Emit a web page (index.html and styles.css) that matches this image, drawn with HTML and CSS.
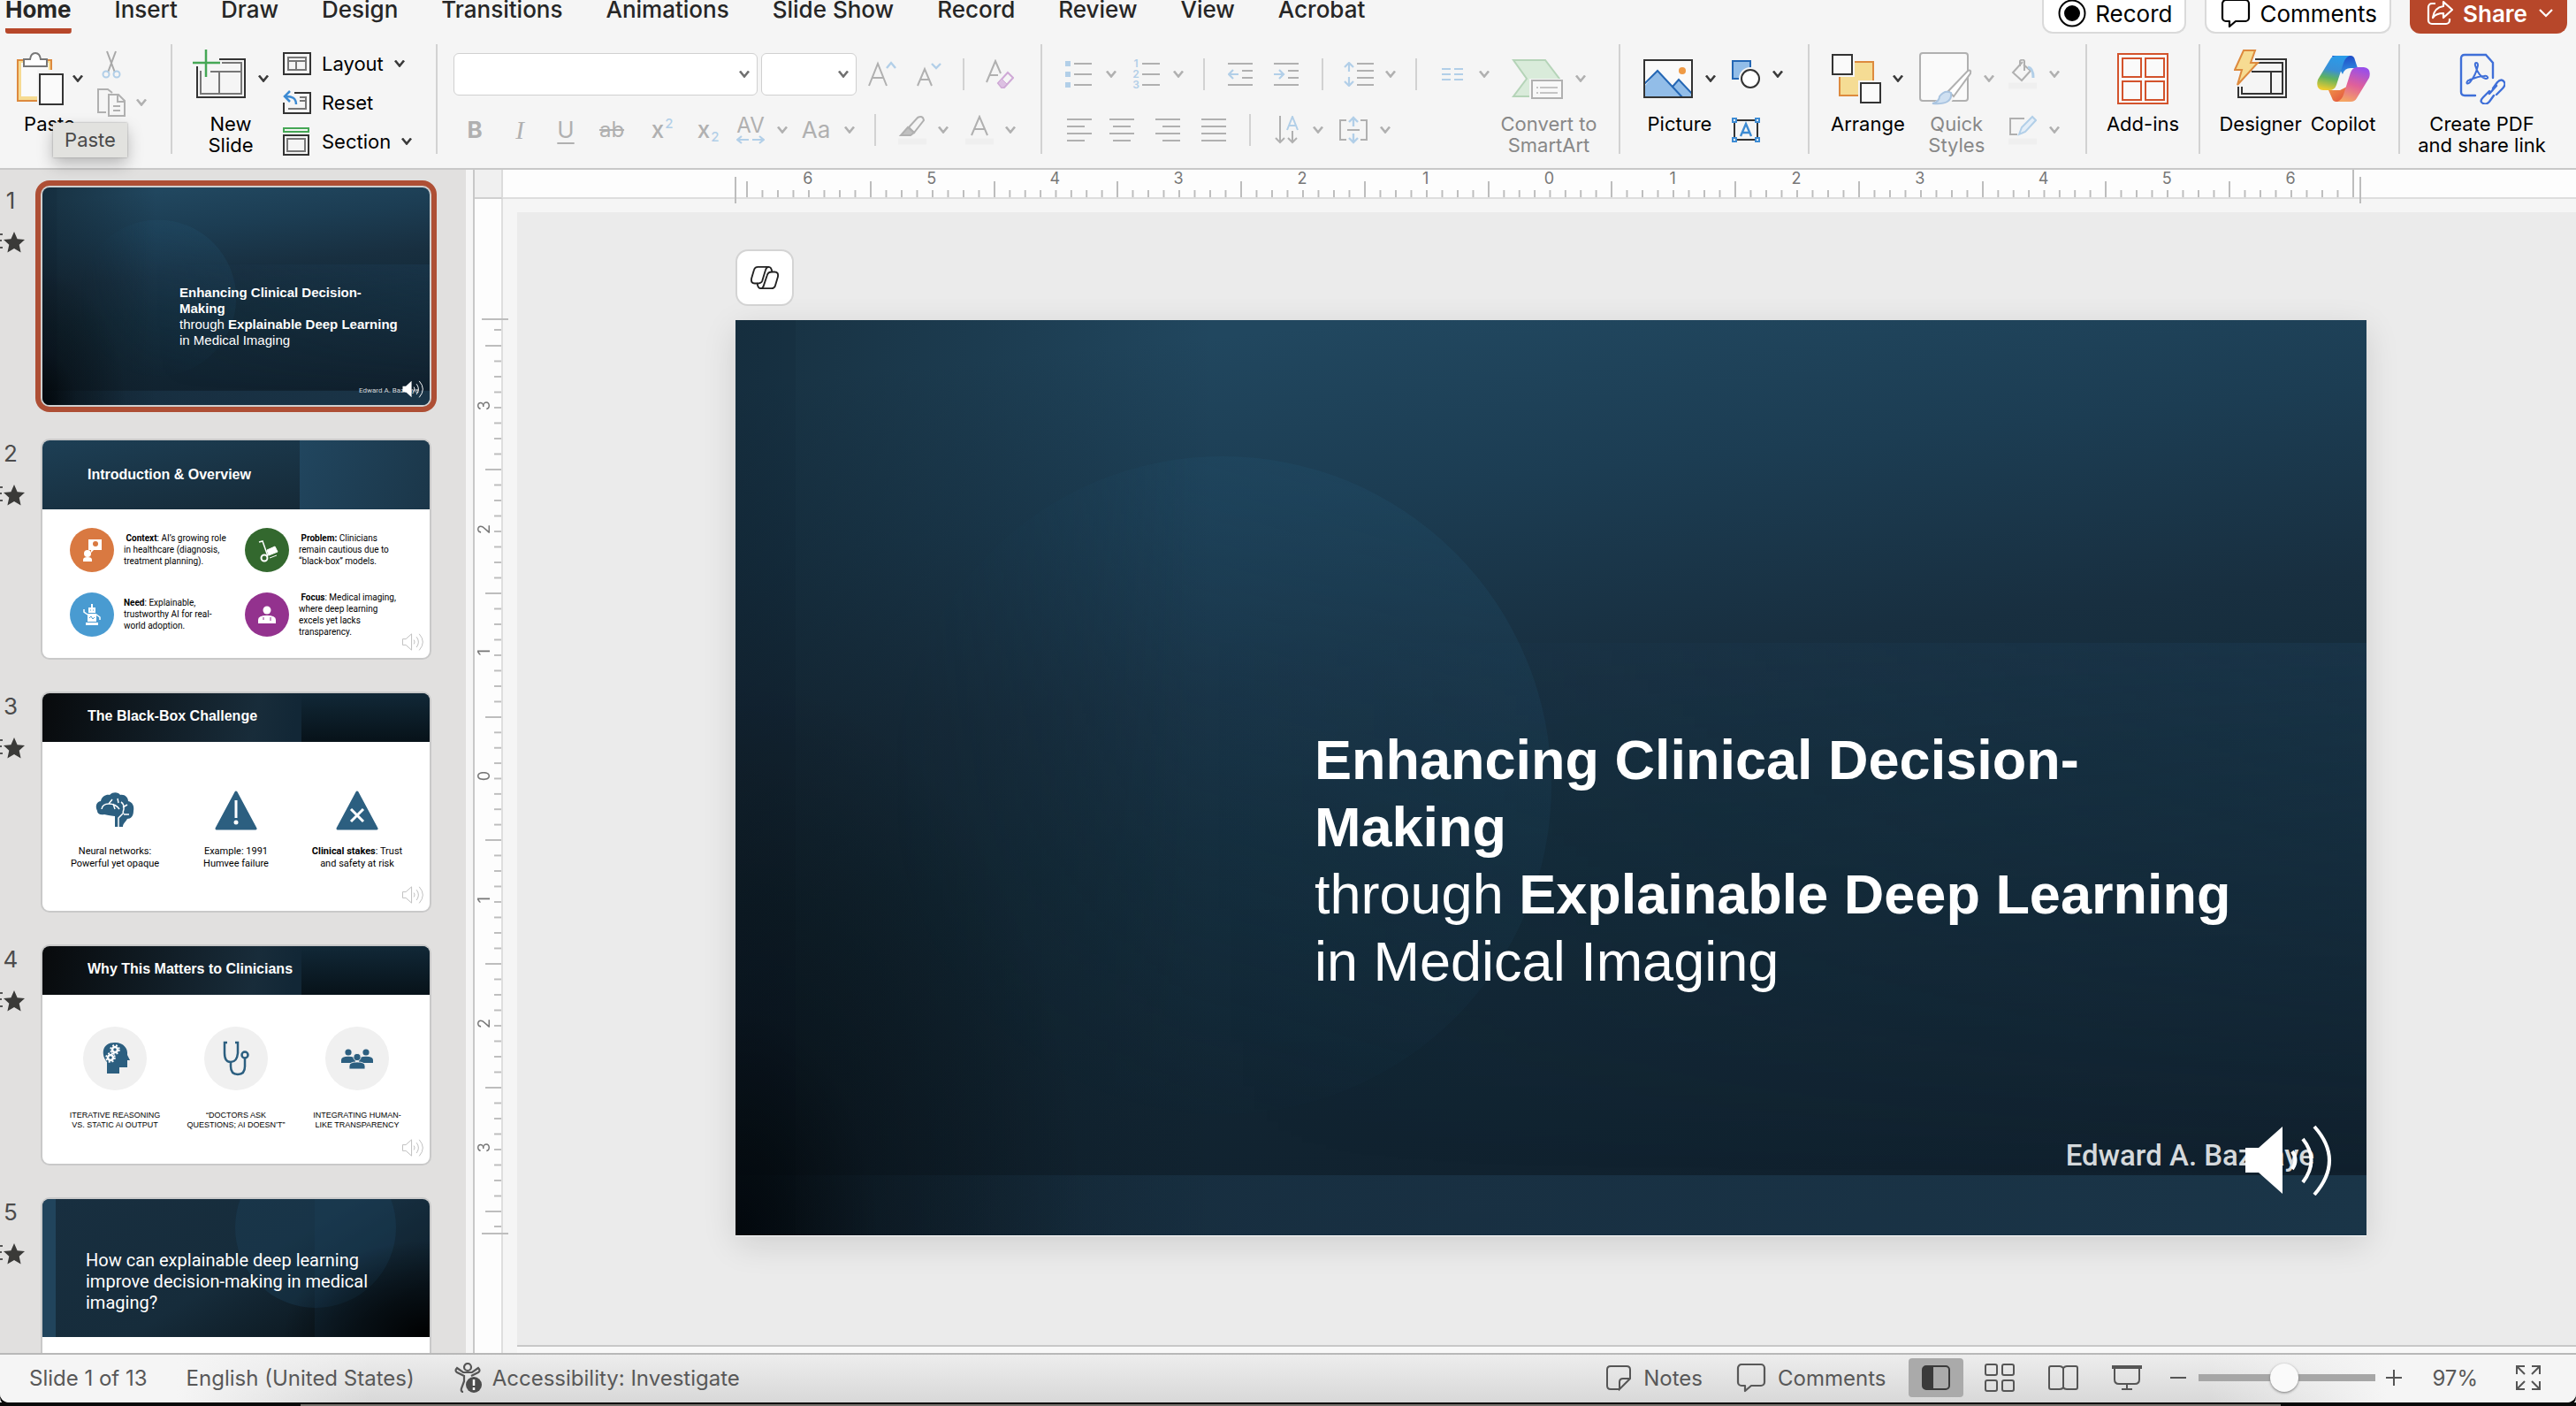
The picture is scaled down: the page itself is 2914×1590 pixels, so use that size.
FILE: index.html
```html
<!DOCTYPE html>
<html lang="en">
<head>
<meta charset="utf-8">
<title>Presentation editor</title>
<link rel="stylesheet" href="styles.css">
</head>
<body>
<svg class="defs" aria-hidden="true">
  <defs>
    <linearGradient id="gBase" x1="0.39" y1="0" x2="0.58" y2="1">
      <stop offset="0" stop-color="#21475f"/><stop offset="0.18" stop-color="#1c3d53"/><stop offset="0.38" stop-color="#182f40"/><stop offset="0.55" stop-color="#132a38"/><stop offset="1" stop-color="#10202d"/>
    </linearGradient>
    <linearGradient id="gLeft" x1="0" y1="0" x2="1" y2="0">
      <stop offset="0" stop-color="#0a1218" stop-opacity="0.42"/><stop offset="0.5" stop-color="#0a1218" stop-opacity="0.22"/><stop offset="1" stop-color="#0a1218" stop-opacity="0"/>
    </linearGradient>
    <radialGradient id="gCorner" cx="0" cy="1" r="1">
      <stop offset="0" stop-color="#000204" stop-opacity="0.78"/><stop offset="0.4" stop-color="#000204" stop-opacity="0.28"/><stop offset="1" stop-color="#000204" stop-opacity="0"/>
    </radialGradient>
    <linearGradient id="gCircle" x1="0.65" y1="0" x2="0.35" y2="1">
      <stop offset="0" stop-color="#22506c" stop-opacity="0.32"/><stop offset="0.6" stop-color="#1d4560" stop-opacity="0.16"/><stop offset="1" stop-color="#1d4560" stop-opacity="0"/>
    </linearGradient>
    <linearGradient id="gSide" x1="0" y1="0" x2="1" y2="0">
      <stop offset="0" stop-color="#000"/><stop offset="0.45" stop-color="#fff"/><stop offset="1" stop-color="#fff"/>
    </linearGradient>
    <mask id="mSide"><rect x="179" y="154" width="744" height="744" fill="url(#gSide)"/></mask>
    <linearGradient id="gPanel" x1="0" y1="0" x2="1" y2="0">
      <stop offset="0" stop-color="#1e3f5a" stop-opacity="0"/><stop offset="1" stop-color="#1e3f5a" stop-opacity="0.38"/>
    </linearGradient>
    <linearGradient id="gFade" x1="0" y1="0" x2="0" y2="1">
      <stop offset="0" stop-color="#fff"/><stop offset="1" stop-color="#000"/>
    </linearGradient>
    <mask id="mFade"><rect x="540" y="365" width="1305" height="602" fill="url(#gFade)"/></mask>
    <linearGradient id="gBand" x1="0" y1="0" x2="1" y2="0">
      <stop offset="0" stop-color="#1c3c52" stop-opacity="0.2"/><stop offset="0.35" stop-color="#1b3549" stop-opacity="0.7"/><stop offset="1" stop-color="#1a3548"/>
    </linearGradient>
    <linearGradient id="gBlue" x1="0" y1="0" x2="0.2" y2="1"><stop offset="0" stop-color="#1d42c4"/><stop offset="1" stop-color="#2f8fe0"/></linearGradient>
    <linearGradient id="gCoA" x1="0.5" y1="0" x2="0.3" y2="1"><stop offset="0" stop-color="#2a9be8"/><stop offset="0.4" stop-color="#3a8fd6"/><stop offset="0.65" stop-color="#5fb25f"/><stop offset="1" stop-color="#f2cc2e"/></linearGradient>
    <linearGradient id="gCoB" x1="0.6" y1="0" x2="0.3" y2="1"><stop offset="0" stop-color="#9a4fe8"/><stop offset="0.5" stop-color="#e0609a"/><stop offset="1" stop-color="#f5a562"/></linearGradient>
    <linearGradient id="gCoC" x1="0" y1="0" x2="1" y2="1"><stop offset="0" stop-color="#f29a4a"/><stop offset="1" stop-color="#e04a3c"/></linearGradient>
    <symbol id="art" viewBox="0 0 1845 1035" preserveAspectRatio="none">
      <rect width="1845" height="1035" fill="url(#gBase)"/>
      <rect x="540" y="365" width="1305" height="602" fill="url(#gPanel)" mask="url(#mFade)"/>
      <rect y="967" width="1845" height="68" fill="url(#gBand)"/>
      <circle cx="551" cy="526" r="372" fill="url(#gCircle)" mask="url(#mSide)"/>
      <rect width="543" height="1035" fill="url(#gLeft)"/>
      <rect y="400" width="400" height="635" fill="url(#gCorner)"/>
      <rect width="68" height="1035" fill="#02070b" opacity="0.06"/>
    </symbol>
    <symbol id="chev" viewBox="0 0 12 8"><path d="M1 0.5L6 6.5L11 0.5" fill="none" stroke="currentColor" stroke-width="2.6"/></symbol>
    <symbol id="audio" viewBox="0 0 104 80"><path d="M2 26h15L44 2v76L17 54H2z" fill="var(--spk)" stroke="var(--spkline)" stroke-width="var(--spkw)"/><path d="M55 30q7 10 0 20M67 16q19 24 0 49M80 2q34 38 0 77" fill="none" stroke="var(--spkwave)" stroke-width="4"/></symbol>
    <symbol id="star" viewBox="0 0 28 24"><path d="M0 3h3M0 10h2M0 18h3" stroke="#555" stroke-width="2"/><path d="M16 0l3.600 8.200 8.400.8-6.300 5.700 1.900 8.800L16 19l-7.600 4.500 1.900-8.800L4 9l8.400-.8z" fill="#3a3a38"/></symbol>
    <symbol id="comment" viewBox="0 0 34 34"><path d="M6 2h22a4 4 0 0 1 4 4v16a4 4 0 0 1-4 4H17l-7 6v-6H6a4 4 0 0 1-4-4V6a4 4 0 0 1 4-4z" fill="none" stroke="currentColor" stroke-width="2.200" stroke-linejoin="round"/></symbol>
    <symbol id="person" viewBox="0 0 20 20"><circle cx="10" cy="5" r="4.500"/><path d="M0 20v-4q0-5 10-5t10 5v4z"/></symbol>
  </defs>
</svg>

<header class="topbar">
  <nav class="tabs">
    <a class="tab active" href="#">Home</a><a class="tab" href="#">Insert</a><a class="tab" href="#">Draw</a><a class="tab" href="#">Design</a><a class="tab" href="#">Transitions</a><a class="tab" href="#">Animations</a><a class="tab" href="#">Slide Show</a><a class="tab" href="#">Record</a><a class="tab" href="#">Review</a><a class="tab" href="#">View</a><a class="tab" href="#">Acrobat</a>
  </nav>
  <div class="top-actions">
    <button class="pill"><svg width="32" height="32" viewBox="0 0 32 32"><circle cx="16" cy="16" r="14.500" fill="none" stroke="#000" stroke-width="2"/><circle cx="16" cy="16" r="9"/></svg>Record</button>
    <button class="pill"><svg width="34" height="34"><use href="#comment"/></svg>Comments</button>
    <button class="pill share"><svg width="32" height="32" viewBox="0 0 32 32" fill="none" stroke="#fff" stroke-width="2.200" stroke-linejoin="round"><path d="M11 5H7a4 4 0 0 0-4 4v15a4 4 0 0 0 4 4h16a4 4 0 0 0 4-4v-2"/><path d="M20 3l10 9-10 9v-5c-6 0-9 1-12 5 1-8 5-12 12-13z"/></svg>Share<svg class="share-chev" width="16" height="10" viewBox="0 0 16 10" fill="none" stroke="#fff" stroke-width="2.200"><path d="M1 1l7 7 7-7"/></svg></button>
  </div>
</header>

<section class="ribbon" aria-label="Home ribbon">
  <div class="group g-clip">
    <div class="paste-wrap">
      <button class="big"><span class="big-icons"><svg width="54" height="60" viewBox="0 0 54 60"><path d="M2 9h38v46H2z" fill="#f6db92" stroke="#dd8a3e" stroke-width="2"/><path d="M6 12h31v38H6z" fill="#fafafa"/><path d="M24 20h30v40H24z" fill="#f5f5f5"/><path d="M9 8h7q1-7 6-7t6 7h7v8H9z" fill="#fff" stroke="#777" stroke-width="2"/><path d="M27 25h26v34H27z" fill="#fafafa" stroke="#333" stroke-width="2"/></svg><svg class="chev" width="12" height="8"><use href="#chev"/></svg></span><span>Paste</span></button>
      <div class="tooltip" role="tooltip">Paste</div>
    </div>
    <div class="clip-col">
      <button class="ico off" aria-label="Cut"><svg width="22" height="32" viewBox="0 0 22 32" fill="none"><path d="M6 1l9 24M16 1L7 25" stroke="#a8a8a8" stroke-width="2"/><circle cx="5" cy="27" r="3.500" stroke="#b2cfe8" stroke-width="2"/><circle cx="17" cy="27" r="3.500" stroke="#b2cfe8" stroke-width="2"/></svg></button>
      <button class="ico off row-ico" aria-label="Copy"><svg width="32" height="32" viewBox="0 0 32 32" fill="none" stroke="#b0b0b0" stroke-width="2"><path d="M10 27H1V1h11l5 4"/><path d="M13 7h11l7 7v17H13zM23 7v8h8M18 20h8M18 25h8"/></svg><svg class="chev" width="12" height="8"><use href="#chev"/></svg></button>
    </div>
  </div>

  <div class="group g-slides">
    <button class="big"><span class="big-icons"><svg width="60" height="66" viewBox="0 0 60 66" fill="none"><path d="M30 11h29v43H5V19" stroke="#333" stroke-width="2"/><path d="M33 15h22v35H9V24M20 25h35M30 25v25" stroke="#777" stroke-width="2"/><path d="M15 0v31M0 15h31" stroke="#45a755" stroke-width="2.500"/></svg><svg class="chev" width="12" height="8"><use href="#chev"/></svg></span><span>New<br>Slide</span></button>
    <div class="slide-cmds">
      <button class="cmd"><svg width="32" height="28" viewBox="0 0 32 28" fill="none"><path d="M1 2h30v24H1z" stroke="#333" stroke-width="2"/><path d="M6 7h20v14H6zM6 11h20M15 11v10" stroke="#777" stroke-width="2"/></svg>Layout<svg class="chev" width="12" height="8"><use href="#chev"/></svg></button>
      <button class="cmd"><svg width="32" height="28" viewBox="0 0 32 28" fill="none"><path d="M13 3h18v23H1V14" stroke="#333" stroke-width="2"/><path d="M19 8h7v13H6M19 12h7" stroke="#777" stroke-width="2"/><path d="M8 1L2 7l6 6M2 7q13-1 13 9" stroke="#3d8bd3" stroke-width="2.500"/></svg>Reset</button>
      <button class="cmd"><svg width="32" height="32" viewBox="0 0 32 32" fill="none"><path d="M1 1h28v4H1z" stroke="#45a755" stroke-width="2"/><path d="M1 9h28v22H1z" stroke="#333" stroke-width="2"/><path d="M5 13h20v14H5z" stroke="#777" stroke-width="2"/></svg>Section<svg class="chev" width="12" height="8"><use href="#chev"/></svg></button>
    </div>
  </div>

  <div class="group g-font">
    <div class="rows off">
      <div class="row font-a">
        <label class="combo"><select aria-label="Font"><option></option></select><svg width="12" height="8"><use href="#chev"/></svg></label>
        <i></i>
        <label class="combo"><select aria-label="Font size"><option></option></select><svg width="12" height="8"><use href="#chev"/></svg></label>
        <button class="ico" aria-label="Increase font size"><svg width="32" height="30" viewBox="0 0 32 30" fill="none"><path d="M1 28L11 3l10 25M4 19h14" stroke="#b0b0b0" stroke-width="2"/><path d="M21 8l5-6 5 6" stroke="#b2cfe8" stroke-width="2.400"/></svg></button>
        <button class="ico" aria-label="Decrease font size"><svg width="28" height="30" viewBox="0 0 28 30" fill="none"><path d="M1 28L9 9l8 19M4 21h11" stroke="#b0b0b0" stroke-width="2"/><path d="M17 3l5 5 5-5" stroke="#b2cfe8" stroke-width="2.400"/></svg></button>
        <span class="sep"></span>
        <button class="ico" aria-label="Clear formatting"><svg width="32" height="34" viewBox="0 0 32 34" fill="none"><path d="M1 26L11 2l6 14M4 18h10" stroke="#b0b0b0" stroke-width="2"/><path d="M25 15l6 6-10 11h-3l-4-5z" stroke="#cfa9d6" stroke-width="2"/><path d="M18 22l6 6-4 4h-2l-4-5z" fill="#dcc0e2" stroke="#cfa9d6"/></svg></button>
      </div>
      <div class="row font-b">
        <button class="ico glyph b">B</button><button class="ico glyph i">I</button><button class="ico glyph u">U</button><button class="ico glyph s">ab</button>
        <button class="ico glyph x">x<sup>2</sup></button><button class="ico glyph x">x<sub>2</sub></button>
        <button class="ico glyph av">AV<svg width="32" height="10" viewBox="0 0 32 10" fill="none" stroke="#b2cfe8" stroke-width="2.200"><path d="M6 1L1 5l5 4M1 5h13M26 1l5 4-5 4M31 5H18"/></svg></button>
        <svg width="12" height="8"><use href="#chev"/></svg>
        <button class="ico glyph aa">Aa</button>
        <svg width="12" height="8"><use href="#chev"/></svg>
        <span class="sep"></span>
        <button class="ico" aria-label="Highlight"><svg width="32" height="34" viewBox="0 0 32 34" fill="none" stroke="#b0b0b0" stroke-width="2"><path d="M12 14L22 3q6-3 7 3L18 20z"/><path d="M11 14l7 6-4 3H3z" fill="#c0c0c0"/><path d="M0 30h32" stroke="#efefef" stroke-width="7"/></svg></button>
        <svg width="12" height="8"><use href="#chev"/></svg>
        <button class="ico" aria-label="Font color"><svg width="32" height="34" viewBox="0 0 32 34" fill="none" stroke="#b0b0b0" stroke-width="2"><path d="M7 23L16 2l9 21M10 16h12"/><path d="M0 30h32" stroke="#efefef" stroke-width="7"/></svg></button>
        <svg width="12" height="8"><use href="#chev"/></svg>
      </div>
    </div>
  </div>

  <div class="group g-para">
    <div class="rows off">
      <div class="row para-a">
        <button class="ico" aria-label="Bullets"><svg width="30" height="32" viewBox="0 0 30 32"><path d="M0 1h6v6H0zM0 13h6v6H0zM0 25h6v6H0z" fill="#b2cfe8"/><path d="M10 4h20M10 16h20M10 28h20" stroke="#b0b0b0" stroke-width="2"/></svg></button>
        <svg width="12" height="8"><use href="#chev"/></svg>
        <button class="ico numbering" aria-label="Numbering"><span class="nums">1<br>2<br>3</span><svg width="20" height="34" viewBox="0 0 20 34"><path d="M0 5h20M0 17h20M0 29h20" stroke="#b0b0b0" stroke-width="2"/></svg></button>
        <svg width="12" height="8"><use href="#chev"/></svg>
        <span class="sep"></span>
        <button class="ico" aria-label="Decrease indent"><svg width="28" height="28" viewBox="0 0 28 28" fill="none" stroke="#b0b0b0" stroke-width="2"><path d="M0 2h28M16 10h12M16 18h12M0 26h28"/><path d="M6 9l-5 5 5 5M1 14h11" stroke="#b2cfe8" stroke-width="2.200"/></svg></button>
        <button class="ico" aria-label="Increase indent"><svg width="28" height="28" viewBox="0 0 28 28" fill="none" stroke="#b0b0b0" stroke-width="2"><path d="M0 2h28M16 10h12M16 18h12M0 26h28"/><path d="M6 9l5 5-5 5M11 14H0" stroke="#b2cfe8" stroke-width="2.200"/></svg></button>
        <span class="sep"></span>
        <button class="ico" aria-label="Line spacing"><svg width="34" height="28" viewBox="0 0 34 28" fill="none" stroke="#b0b0b0" stroke-width="2"><path d="M15 2h19M15 10h19M15 18h19M15 26h19"/><path d="M1 6l5-5 5 5M6 1v10M1 22l5 5 5-5M6 27V17" stroke="#b2cfe8" stroke-width="2.200"/></svg></button>
        <svg width="12" height="8"><use href="#chev"/></svg>
        <span class="sep"></span>
        <button class="ico" aria-label="Columns"><svg width="24" height="16" viewBox="0 0 24 16" stroke="#b2cfe8" stroke-width="2"><path d="M0 2h10M14 2h10M0 8h10M14 8h10M0 14h10M14 14h10"/></svg></button>
        <svg width="12" height="8"><use href="#chev"/></svg>
      </div>
      <div class="row para-b">
        <button class="ico" aria-label="Align left"><svg width="28" height="28" viewBox="0 0 28 28" stroke="#b0b0b0" stroke-width="2"><path d="M0 2h28M0 10h20M0 18h28M0 26h20"/></svg></button>
        <button class="ico" aria-label="Center"><svg width="28" height="28" viewBox="0 0 28 28" stroke="#b0b0b0" stroke-width="2"><path d="M0 2h28M4 10h20M0 18h28M4 26h20"/></svg></button>
        <button class="ico" aria-label="Align right"><svg width="28" height="28" viewBox="0 0 28 28" stroke="#b0b0b0" stroke-width="2"><path d="M0 2h28M8 10h20M0 18h28M8 26h20"/></svg></button>
        <button class="ico" aria-label="Justify"><svg width="28" height="28" viewBox="0 0 28 28" stroke="#b0b0b0" stroke-width="2"><path d="M0 2h28M0 10h28M0 18h28M0 26h28"/></svg></button>
        <span class="sep"></span>
        <button class="ico" aria-label="Text direction"><svg width="28" height="32" viewBox="0 0 28 32" fill="none" stroke="#b0b0b0" stroke-width="2"><path d="M6 0v30M1 25l5 5 5-5M20 17v13M15 25l5 5 5-5"/><path d="M14 16l6-15 6 15M16 11h8" stroke="#b2cfe8"/></svg></button>
        <svg width="12" height="8"><use href="#chev"/></svg>
        <button class="ico" aria-label="Align text"><svg width="32" height="32" viewBox="0 0 32 32" fill="none" stroke="#b0b0b0" stroke-width="2"><path d="M8 5H1v22h7M24 5h7v22h-7M9 16h14"/><path d="M11 7l5-5 5 5M16 2v10M11 25l5 5 5-5M16 30V20" stroke="#b2cfe8" stroke-width="2.400"/></svg></button>
        <svg width="12" height="8"><use href="#chev"/></svg>
      </div>
    </div>
    <button class="big off wide"><span class="big-icons"><svg width="58" height="46" viewBox="0 0 58 46"><path d="M2 2h36l16 21-16 20H2l15-20z" fill="#d9ebda" stroke="#b5d4b8" stroke-width="2"/><path d="M20 23h38v23H20z" fill="#f5f5f5"/><path d="M23 25h34v20H23z" fill="#f8f8f8" stroke="#b0b0b0" stroke-width="2"/><path d="M28 33h2M32 33h20M28 39h2M32 39h20" stroke="#c4c4c4" stroke-width="2"/></svg><svg class="chev" width="12" height="8"><use href="#chev"/></svg></span><span>Convert to<br>SmartArt</span></button>
  </div>

  <div class="group g-insert">
    <button class="big"><span class="big-icons"><svg width="56" height="44" viewBox="0 0 56 44"><path d="M1 1h54v42H1z" fill="#fafafa"/><path d="M1 31L16 13l28 30H1zM33 31l7-8 15 18v2H44z" fill="#92bde8"/><path d="M1 28L16 13l28 30M33 31l7-8 15 16" fill="none" stroke="#2467b5" stroke-width="2"/><path d="M1 1h54v42H1z" fill="none" stroke="#333" stroke-width="2"/><circle cx="44" cy="13" r="4" fill="#ef9a45"/></svg><svg class="chev" width="12" height="8"><use href="#chev"/></svg></span><span>Picture</span></button>
    <div class="rows">
      <div class="row mini"><button class="ico" aria-label="Shapes"><svg width="32" height="34" viewBox="0 0 32 34"><path d="M1 2h20v20H1z" fill="#92bde8" stroke="#2467b5" stroke-width="2"/><circle cx="21" cy="22" r="13" fill="#f5f5f5"/><circle cx="21" cy="22" r="10" fill="#fff" stroke="#333" stroke-width="2"/></svg></button><svg width="12" height="8"><use href="#chev"/></svg></div>
      <div class="row mini"><button class="ico" aria-label="Text box"><svg width="32" height="30" viewBox="0 0 32 30" fill="none"><path d="M3 4h26v22H3z" stroke="#333" stroke-width="2"/><path d="M10 22l6-14 6 14M12 18h8" stroke="#3d8bd3" stroke-width="2.400"/><path d="M1 2h4v4H1zM27 2h4v4h-4zM1 24h4v4H1zM27 24h4v4h-4z" fill="#fff" stroke="#3d8bd3" stroke-width="2"/></svg></button></div>
    </div>
  </div>

  <div class="group g-style">
    <button class="big"><span class="big-icons"><svg width="56" height="56" viewBox="0 0 56 56"><path d="M9 9h38v38H9z" fill="#f5dc94" stroke="#dd8a3e" stroke-width="2"/><path d="M0 0h26v26H0zM30 30h26v26H30z" fill="#f5f5f5"/><path d="M1 1h22v22H1zM33 33h22v22H33z" fill="#fafafa" stroke="#333" stroke-width="2"/></svg><svg class="chev" width="12" height="8"><use href="#chev"/></svg></span><span>Arrange</span></button>
    <button class="big off"><span class="big-icons"><svg width="60" height="60" viewBox="0 0 60 60"><rect x="1" y="1" width="54" height="54" rx="3" fill="#fafafa" stroke="#b0b0b0" stroke-width="2"/><path d="M62 16L34 60H12L40 40z" fill="#f5f5f5"/><path d="M33 44L55 21q4-2 3 3L39 50z" fill="#fff" stroke="#b0b0b0" stroke-width="2"/><path d="M36 46q2 14-21 12 8-2 8-8 6-8 13-4z" fill="#cfe0f1" stroke="#a9c4e0" stroke-width="2"/></svg><svg class="chev" width="12" height="8"><use href="#chev"/></svg></span><span>Quick<br>Styles</span></button>
    <div class="rows off">
      <div class="row mini"><button class="ico" aria-label="Shape fill"><svg width="32" height="34" viewBox="0 0 32 34" fill="none" stroke="#b0b0b0" stroke-width="2"><path d="M16 3L5 15l10 9 10-11-8-7"/><path d="M13 8V2q3-3 5 0v11"/><path d="M22 9q6 1 6 12" stroke="#b2cfe8" stroke-width="3"/><path d="M0 30h32" stroke="#efefef" stroke-width="7"/></svg></button><svg width="12" height="8"><use href="#chev"/></svg></div>
      <div class="row mini"><button class="ico" aria-label="Shape outline"><svg width="32" height="34" viewBox="0 0 32 34" fill="none" stroke="#b0b0b0" stroke-width="2"><path d="M18 4H2v18h8"/><path d="M12 22l3-8L27 2l4 4-12 13z" fill="#e4eef8" stroke="#b2cfe8"/><path d="M0 30h32" stroke="#efefef" stroke-width="7"/></svg></button><svg width="12" height="8"><use href="#chev"/></svg></div>
    </div>
  </div>

  <div class="group g-one">
    <button class="big"><span class="big-icons"><svg width="58" height="58" viewBox="0 0 58 58" fill="#fafafa" stroke="#d3532c" stroke-width="2"><path d="M1 1h56v56H1z"/><path d="M6 6h21v21H6zM32 6h21v21H32zM6 32h21v21H6zM32 32h21v21H32z"/></svg></span><span>Add-ins</span></button>
  </div>

  <div class="group g-ai">
    <button class="big"><span class="big-icons"><svg width="60" height="66" viewBox="0 0 60 66" fill="none"><path d="M24 11h35v43H5V42" stroke="#333" stroke-width="2"/><path d="M26 15h29v35H9V42M20 25h35M42 25v25" stroke="#333" stroke-width="2"/><path d="M11 1h13l-5 14h8L4 40l5-17H1z" fill="#f6db92" stroke="#dd8a3e" stroke-width="2"/></svg></span><span>Designer</span></button>
    <button class="big"><span class="big-icons"><svg width="60" height="54" viewBox="0 0 60 54"><path d="M17 1h21q4 0 5 5l3 9h-8q-7 0-9 7z" fill="url(#gBlue)"/><path d="M13 40h13l10-5-5 14q-1 4-5 4h-4q-4 0-5-4z" fill="url(#gCoC)"/><path d="M15 5q2-4 7-4h15q-5 2-7 8l-8 25q-2 6-8 6H7q-9-1-6-12z" fill="url(#gCoA)"/><path d="M45 49q-2 4-7 4H23q5-2 7-8l8-25q2-6 8-6h7q9 1 6 12z" fill="url(#gCoB)"/></svg></span><span>Copilot</span></button>
  </div>

  <div class="group g-pdf">
    <button class="big"><span class="big-icons"><svg width="52" height="58" viewBox="0 0 52 58" fill="none" stroke="#3f6fd8" stroke-width="2.400" stroke-linecap="round"><path d="M18 48H6q-4 0-4-4V6q0-4 4-4h24l8 9v17"/><path d="M10 31c-3 3-1 5 2 2 6-7 8-14 9-19 0-4-4-4-3 0 2 8 7 14 12 15 4 0 2-4-2-3-6 0-13 3-18 5z" stroke-width="2"/><path d="M34 43l-7 7q-5 5 0 7 3 2 7-2l5-7M38 40l5-7q5-5 8 0 2 3-3 8l-6 6M34 46l8-9"/></svg></span><span>Create PDF<br>and share link</span></button>
  </div>
</section>

<main class="work">
  <ol class="thumbs">
    <li class="thumb-item">
      <div class="meta"><span>1</span><svg width="28" height="24"><use href="#star"/></svg></div>
      <div class="thumb selected cover">
        <svg class="backdrop"><use href="#art"/></svg>
        <p class="t-title"><b>Enhancing Clinical Decision-<br>Making</b><br>through <b>Explainable Deep Learning</b><br>in Medical Imaging</p>
        <p class="t-name">Edward A. Bazuaye</p>
        <svg class="spk light" width="25" height="20"><use href="#audio"/></svg>
      </div>
    </li>
    <li class="thumb-item">
      <div class="meta"><span>2</span><svg width="28" height="24"><use href="#star"/></svg></div>
      <div class="thumb">
        <h3 class="band tall">Introduction &amp; Overview</h3>
        <div class="quad">
          <svg width="50" height="50" viewBox="0 0 50 50"><circle cx="25" cy="25" r="25" fill="#d97941"/><g fill="#fff"><circle cx="20" cy="29" r="4"/><path d="M15 38v-2q0-3 5-3t5 3v2zM21 13h15v12H27l-3 3v-3h-3z"/></g><circle cx="29" cy="18" r="3" fill="#d97941"/></svg>
          <p>&nbsp;<b>Context</b>: AI’s growing role<br>in healthcare (diagnosis,<br>treatment planning).</p>
          <svg width="50" height="50" viewBox="0 0 50 50"><circle cx="25" cy="25" r="25" fill="#33682e"/><path d="M16 16l4-1 6 17" fill="none" stroke="#fff" stroke-width="1.500"/><circle cx="22" cy="34" r="3.500" fill="none" stroke="#fff" stroke-width="2"/><path d="M25 25l9-4 3 6-10 4zM28 34l8-3" fill="#fff" stroke="#fff"/></svg>
          <p>&nbsp;<b>Problem:</b> Clinicians<br>remain cautious due to<br>“black-box” models.</p>
          <svg width="50" height="50" viewBox="0 0 50 50"><circle cx="25" cy="25" r="25" fill="#499bd1"/><path d="M21 17h8v6h-8zM20 24h10v9H20zM18 34h14v3H18zM24 13h2v4h-2z" fill="#fff"/><path d="M20 25l-4-3v-3M30 25l4 3v3" fill="none" stroke="#fff" stroke-width="1.500"/><path d="M22 29l2-2 2 3 2-2M23 20h1M26 20h1" fill="none" stroke="#499bd1"/></svg>
          <p><b>Need</b>: Explainable,<br>trustworthy AI for real-<br>world adoption.</p>
          <svg width="50" height="50" viewBox="0 0 50 50"><circle cx="25" cy="25" r="25" fill="#93328e"/><svg x="15" y="15" width="20" height="20" fill="#fff"><use href="#person"/></svg><path d="M21 28v3M29 28v4" stroke="#93328e"/></svg>
          <p>&nbsp;<b>Focus</b>: Medical imaging,<br>where deep learning<br>excels yet lacks<br>transparency.</p>
        </div>
        <svg class="spk" width="25" height="20"><use href="#audio"/></svg>
      </div>
    </li>
    <li class="thumb-item">
      <div class="meta"><span>3</span><svg width="28" height="24"><use href="#star"/></svg></div>
      <div class="thumb">
        <h3 class="band dark">The Black-Box Challenge</h3>
        <div class="trio">
          <figure><svg width="48" height="46" viewBox="0 0 48 46"><path d="M4 24c-3-6 0-11 4-11 1-6 7-8 10-7 4-4 10-3 12 0 5-1 9 3 9 7 5 1 7 6 6 11 0 6-3 9-7 9-2 4-5 5-5 9H24V30c-6-1-9-1-12-2-5 1-8-1-8-4z" fill="#2c5f80"/><path d="M28 42V32l6-6M9 22q1-6 8-6l4-5M17 16q8 0 12 6M27 10l1 5M31 14q5 3 2 12M22 16l2 6M33 20l5-3M34 28h6" fill="none" stroke="#fff" stroke-width="1.500"/></svg><figcaption>Neural networks:<br>Powerful yet opaque</figcaption></figure>
          <figure><svg width="48" height="46" viewBox="0 0 48 46"><path d="M24 3L46 44H2z" fill="#2c5f80" stroke="#2c5f80" stroke-width="3" stroke-linejoin="round"/><path d="M24 12v20" stroke="#fff" stroke-width="3"/><circle cx="24" cy="37" r="2.500" fill="#fff"/></svg><figcaption>Example: 1991<br>Humvee failure</figcaption></figure>
          <figure><svg width="48" height="46" viewBox="0 0 48 46"><path d="M24 3L46 44H2z" fill="#2c5f80" stroke="#2c5f80" stroke-width="3" stroke-linejoin="round"/><path d="M17 22l14 14M31 22L17 36" stroke="#fff" stroke-width="3"/></svg><figcaption><b>Clinical stakes</b>: Trust<br>and safety at risk</figcaption></figure>
        </div>
        <svg class="spk" width="25" height="20"><use href="#audio"/></svg>
      </div>
    </li>
    <li class="thumb-item">
      <div class="meta"><span>4</span><svg width="28" height="24"><use href="#star"/></svg></div>
      <div class="thumb">
        <h3 class="band dark">Why This Matters to Clinicians</h3>
        <div class="trio discs">
          <figure><svg width="72" height="72" viewBox="0 0 72 72"><circle cx="36" cy="36" r="36" fill="#f0f0f0"/><path d="M27 53V40c-7-8-6-22 9-22 10 0 15 7 14 14l3 6h-3v8h-9v7z" fill="#2c5f80"/><g fill="none" stroke="#fff"><circle cx="36" cy="26" r="3" stroke-width="2.500"/><circle cx="36" cy="26" r="5" stroke-dasharray="2 2" stroke-width="1.500"/><circle cx="31" cy="35" r="3" stroke-width="2.500"/><circle cx="31" cy="35" r="5" stroke-dasharray="2 2" stroke-width="1.500"/></g></svg><figcaption>ITERATIVE REASONING<br>VS. STATIC AI OUTPUT</figcaption></figure>
          <figure><svg width="72" height="72" viewBox="0 0 72 72"><circle cx="36" cy="36" r="36" fill="#f0f0f0"/><g fill="none" stroke="#2c5f80" stroke-width="2.500"><path d="M26 18h-3v12q0 10 7 10t8-10V18h-3M30 40v5q0 9 8 9t8-9V36"/><circle cx="46" cy="32" r="3.500"/></g></svg><figcaption>“DOCTORS ASK<br>QUESTIONS; AI DOESN’T”</figcaption></figure>
          <figure><svg width="72" height="72" viewBox="0 0 72 72"><circle cx="36" cy="36" r="36" fill="#f0f0f0"/><g fill="#2c5f80"><svg x="18" y="24" width="16" height="18"><use href="#person"/></svg><svg x="38" y="24" width="16" height="18"><use href="#person"/></svg><svg x="27" y="30" width="18" height="18" stroke="#f0f0f0"><use href="#person"/></svg></g></svg><figcaption>INTEGRATING HUMAN-<br>LIKE TRANSPARENCY</figcaption></figure>
        </div>
        <svg class="spk" width="25" height="20"><use href="#audio"/></svg>
      </div>
    </li>
    <li class="thumb-item">
      <div class="meta"><span>5</span><svg width="28" height="24"><use href="#star"/></svg></div>
      <div class="thumb">
        <div class="question">
          <svg class="backdrop" viewBox="0 0 438 156" preserveAspectRatio="none"><defs><linearGradient id="gq" x1="0" y1="0" x2="1" y2="0.600"><stop offset="0" stop-color="#182f40"/><stop offset="0.600" stop-color="#162c3b"/><stop offset="1" stop-color="#0b161d"/></linearGradient><radialGradient id="gq2" cx="1" cy="1" r="0.700"><stop offset="0" stop-color="#000"/><stop offset="1" stop-color="#000" stop-opacity="0"/></radialGradient></defs><rect width="438" height="156" fill="url(#gq)"/><rect x="308" width="130" height="156" fill="#1d405a" opacity="0.250"/><circle cx="309" cy="32" r="91" fill="#1f4a68" opacity="0.300"/><rect x="200" width="238" height="156" fill="url(#gq2)"/><rect width="15" height="156" fill="#21445c"/></svg>
          <p>How can explainable deep learning<br>improve decision-making in medical<br>imaging?</p>
        </div>
      </div>
    </li>
  </ol>

  <section class="editor">
    <div class="corner"></div>
    <div class="hruler"><div class="hspan"><span>6</span><span>5</span><span>4</span><span>3</span><span>2</span><span>1</span><span>0</span><span>1</span><span>2</span><span>3</span><span>4</span><span>5</span><span>6</span></div></div>
    <div class="vruler"><div class="vspan"><span><em>3</em></span><span><em>2</em></span><span><em>1</em></span><span><em>0</em></span><span><em>1</em></span><span><em>2</em></span><span><em>3</em></span></div></div>
    <div class="stage">
      <button class="copilot" aria-label="Copilot"><svg width="32" height="28" viewBox="0 0 34 30" fill="none" stroke="#222" stroke-width="2" stroke-linejoin="round"><path d="M9 2h13q3 0 4 6h3q5 0 4 6l-3 10q-1 4-5 4H12q-3 0-4-6H5q-5 0-4-6l3-10q1-4 5-4z"/><path d="M22 2q-3 0-4 4l-4 13q-1 3-6 3M12 28q3 0 4-4l4-12q1-4 6-4"/></svg></button>
      <article class="slide">
        <svg class="backdrop"><use href="#art"/></svg>
        <h1><b>Enhancing Clinical Decision-<br>Making</b><br>through <b>Explainable Deep Learning</b><br>in Medical Imaging</h1>
        <p class="author">Edward A. Bazuaye</p>
        <svg class="spk light" width="104" height="80"><use href="#audio"/></svg>
      </article>
    </div>
  </section>
</main>

<footer class="status">
  <span class="count">Slide 1 of 13</span>
  <button class="lang">English (United States)</button>
  <button class="a11y"><svg width="32" height="34" viewBox="0 0 32 34" fill="none" stroke="#555" stroke-width="2.200"><circle cx="15" cy="5" r="4"/><path d="M10 33q-3 0-2-4l3-8v-6L3 11q-3-2 0-5l7 5h10l7-5q3 3 0 5l-8 4"/><circle cx="22" cy="25" r="9" fill="#4c4c4c" stroke="none"/><path d="M22 19v7M22 28v3" stroke="#fff" stroke-width="2.500"/></svg>Accessibility: Investigate</button>
  <span class="grow"></span>
  <button class="st notes"><svg width="30" height="30" viewBox="0 0 30 30" fill="none" stroke="#555" stroke-width="2"><path d="M15 28H6q-4 0-4-4V6q0-4 4-4h18q4 0 4 4v10L16 28V20q0-4 4-4h8"/></svg>Notes</button>
  <button class="st comments"><svg width="34" height="34"><use href="#comment"/></svg>Comments</button>
  <button class="view on" aria-label="Normal"><svg width="32" height="28" viewBox="0 0 32 28"><rect x="1" y="1" width="30" height="26" rx="4" fill="none" stroke="#3a3a3a" stroke-width="2"/><path d="M5 1h8v26H5q-4 0-4-4V5q0-4 4-4z" fill="#3a3a3a"/></svg></button>
  <button class="view" aria-label="Slide sorter"><svg width="34" height="32" viewBox="0 0 34 32" fill="none" stroke="#555" stroke-width="2"><rect x="1" y="1" width="13" height="12" rx="2"/><rect x="20" y="1" width="13" height="12" rx="2"/><rect x="1" y="19" width="13" height="12" rx="2"/><rect x="20" y="19" width="13" height="12" rx="2"/></svg></button>
  <button class="view" aria-label="Reading view"><svg width="34" height="28" viewBox="0 0 34 28" fill="none" stroke="#555" stroke-width="2"><path d="M17 3v23M17 3q-2-2-4-2H3q-2 0-2 2v22q0 2 2 2h10q3 0 4-2 1 2 4 2h10q2 0 2-2V3q0-2-2-2H21q-2 0-4 2z"/></svg></button>
  <button class="view" aria-label="Slide show"><svg width="34" height="30" viewBox="0 0 34 30" fill="none" stroke="#555" stroke-width="2"><path d="M0 3h34" stroke-width="4"/><path d="M3 4v13q0 5 5 5h18q5 0 5-5V4M17 22v6M11 28h12"/></svg></button>
  <button class="zoomout" aria-label="Zoom out"><svg width="18" height="18" viewBox="0 0 18 18" stroke="#555" stroke-width="2"><path d="M0 9h18"/></svg></button>
  <input class="zoom" type="range" min="0" max="100" value="48" aria-label="Zoom">
  <button class="zoomin" aria-label="Zoom in"><svg width="18" height="18" viewBox="0 0 18 18" stroke="#555" stroke-width="2"><path d="M0 9h18M9 0v18"/></svg></button>
  <button class="pct">97%</button>
  <button class="fit" aria-label="Fit to window"><svg width="28" height="28" viewBox="0 0 28 28" fill="none" stroke="#555" stroke-width="2"><path d="M1 10V1h9M1 1l9 9M18 1h9v9M27 1l-9 9M1 18v9h9M1 27l9-9M27 18v9h-9M27 27l-9-9"/></svg></button>
</footer>
<div class="desktop-edge"></div>
</body>
</html>
```
FILE: styles.css
```css
* { box-sizing: border-box; }
body {
  margin: 0;
  height: 100vh;
  display: flex;
  flex-direction: column;
  overflow: hidden;
  background: #f5f5f5;
  color: #000;
  font-family: Inter, "Liberation Sans", sans-serif;
  font-size: 22px;
}
button { font: inherit; color: inherit; background: none; border: 0; padding: 0; margin: 0; }
a { color: inherit; text-decoration: none; }
p, h1, h3, ol, figure { margin: 0; padding: 0; font-weight: 400; }
svg { display: block; flex: none; }
.defs { position: absolute; width: 0; height: 0; }

/* top bar */
.topbar { display: flex; justify-content: space-between; align-items: flex-start; height: 44px; flex: none; }
.tabs { display: flex; gap: 49px; padding-left: 6px; }
.tab { height: 38px; font-size: 26px; line-height: 22px; font-weight: 500; color: #262626; }
.tab.active { font-weight: 700; background: linear-gradient(#b7472a, #b7472a) bottom / 100% 6px no-repeat; border-radius: 0 0 3px 3px; }
.top-actions { display: flex; gap: 21px; padding-right: 10px; }
.pill { display: flex; align-items: center; gap: 10px; height: 38px; padding: 0 14px 6px 16px; background: #fff; border: 2px solid #dadada; border-top: 0; border-radius: 0 0 12px 12px; font-size: 26px; font-weight: 400; }
.pill.share { background: #b7472a; border-color: #b7472a; color: #fff; font-weight: 600; }
.share-chev { margin-left: 3px; }

/* ribbon */
.ribbon { display: flex; flex: none; height: 148px; padding: 6px 0 16px; border-bottom: 2px solid #c8c8c8; color: #000; }
.group { display: flex; flex: none; height: 124px; border-right: 2px solid #d2d2d2; }
.group:last-child { border-right: 0; flex: 1; }
.chev, .row > svg, .combo > svg { color: #3a3a3a; }
.off { color: #888; }
.off .chev, .row-ico .chev, .off .row > svg, .row-ico { color: #b0b0b0; }
.rows.off > .row > svg { color: #b0b0b0; }
.big { display: flex; flex-direction: column; align-items: center; align-self: flex-start; gap: 6px; padding-top: 6px; line-height: 24px; text-align: center; white-space: nowrap; }
.big-icons { display: flex; align-items: center; gap: 10px; height: 66px; }
.g-slides .big-icons, .g-insert .big-icons, .wide .big-icons { gap: 14px; }
.g-style .big-icons { gap: 13px; }
.g-clip { width: 195px; padding-left: 18px; }
.g-slides { width: 300px; padding-left: 23px; gap: 16px; }
.g-font { width: 684px; padding-left: 18px; }
.g-para { width: 654px; padding-left: 20px; }
.g-insert { width: 214px; padding-left: 26px; gap: 18px; }
.g-style { width: 314px; padding-left: 24px; gap: 16px; }
.g-one { width: 128px; justify-content: center; }
.g-ai { width: 226px; justify-content: center; gap: 10px; padding-right: 4px; }
.g-pdf { justify-content: center; }
.ribbon .g-pdf { padding-right: 14px; }
.wide { width: 110px; margin-left: 4px; }
.paste-wrap { position: relative; width: 76px; }
.tooltip { position: absolute; left: 42px; top: 89px; width: 84px; height: 39px; background: #e2e2df; color: #4a4a4a; line-height: 38px; text-align: center; box-shadow: 0 0 2px #999, 0 8px 18px rgba(0, 0, 0, 0.25); z-index: 2; }
.clip-col { display: flex; flex-direction: column; gap: 11px; padding: 7px 0 0 16px; align-items: flex-start; }
.clip-col .ico:first-child { padding-left: 5px; }
.ico { display: flex; align-items: center; justify-content: center; }
.row-ico { gap: 12px; }
.slide-cmds { display: flex; flex-direction: column; }
.cmd { display: flex; flex: none; align-items: center; gap: 12px; height: 44px; }
.rows { display: flex; flex-direction: column; gap: 15px; padding-top: 10px; align-items: flex-start; }
.row { display: grid; height: 48px; align-items: center; justify-items: center; }
.font-a { grid-template-columns: 344px 4px 108px 58px 48px 30px 52px; }
.font-b { grid-template-columns: 48px 54px 50px 54px 60px 44px 52px 20px 56px 20px 38px 46px 24px 58px 12px; }
.para-a { grid-template-columns: 42px 32px 46px 28px 30px 52px 52px 30px 52px 20px 38px 44px 28px; }
.para-b { grid-template-columns: 44px 52px 52px 52px 30px 54px 16px 64px 8px; }
.mini { grid-template-columns: 32px 40px; }
.sep { width: 2px; height: 36px; background: #d2d2d2; }
.combo { position: relative; display: block; width: 100%; height: 48px; }
.combo select { appearance: none; width: 100%; height: 48px; background: #fff; border: 1px solid #d0d0d0; border-radius: 6px; }
.combo svg { position: absolute; right: 9px; top: 20px; color: #707070; }
.glyph { color: #b0b0b0; font-size: 26px; line-height: 30px; }
.b { font-weight: 700; }
.i { font-family: "Liberation Serif", serif; font-style: italic; font-size: 29px; }
.u { text-decoration: underline; text-decoration-thickness: 2px; text-underline-offset: 5px; }
.s { text-decoration: line-through; text-decoration-thickness: 2px; font-size: 24px; }
.x { font-weight: 500; gap: 1px; }
.x sup, .x sub { color: #b2cfe8; font-size: 15px; line-height: 15px; }
.x sup { align-self: flex-start; }
.x sub { align-self: flex-end; }
.av { flex-direction: column; font-size: 24px; line-height: 22px; }
.numbering { gap: 2px; }
.nums { width: 9px; font-size: 12px; line-height: 12px; font-weight: 600; color: #b2cfe8; }

/* workspace */
.work { display: flex; flex: 1; min-height: 0; }
.thumbs { width: 527px; flex: none; overflow: hidden; list-style: none; background: #e1e0df; padding-top: 20px; display: flex; flex-direction: column; gap: 40px; }
.thumb-item { display: flex; flex: none; }
.meta { width: 48px; display: flex; flex-direction: column; gap: 20px; color: #4c4c4c; font-size: 26px; line-height: 30px; }
.meta span { width: 24px; text-align: center; }
.thumb { position: relative; width: 438px; height: 246px; border-radius: 8px; overflow: hidden; background: #fff; box-shadow: 0 0 0 2px #c9c9c9; font-family: Roboto, "Liberation Sans", sans-serif; }
.thumb.selected { box-shadow: 0 0 0 2px #cfcfcf, 0 0 0 8px #ae4f35; }
.backdrop { position: absolute; inset: 0; width: 100%; height: 100%; z-index: 0; }
.cover { display: flex; flex-direction: column; color: #fff; }
.cover p { position: relative; }
.t-title { padding: 110px 0 0 155px; font-family: "Liberation Sans", sans-serif; font-size: 15px; line-height: 18px; white-space: nowrap; }
.t-name { margin-top: 42px; padding-left: 358px; font-size: 8px; line-height: 12px; color: #d5d9dc; }
.spk { position: absolute; right: 6px; bottom: 8px; --spk: #fff; --spkline: #bdbdbd; --spkw: 4; --spkwave: #bdbdbd; }
.spk.light { --spkline: none; --spkw: 0; --spkwave: #fff; }
.band { color: #fff; font-family: "Liberation Sans", sans-serif; font-size: 16px; font-weight: 700; padding-left: 51px; }
.band.tall { height: 78px; line-height: 78px; background: linear-gradient(115deg, #21465f, #142531 80%) 291px 0 no-repeat, linear-gradient(170deg, #1d3f55, #142531); }
.band.dark { height: 55px; line-height: 52px; background: linear-gradient(#112837, #071219) 293px 0 no-repeat, linear-gradient(100deg, #080a0c, #182c3a 55%, #122736 65%); }
.quad { display: grid; grid-template-columns: 50px 126px 50px 1fr; grid-auto-rows: 73px; column-gap: 11px; align-items: center; padding: 9px 10px 0 31px; font-size: 10px; line-height: 13px; white-space: nowrap; }
.trio { display: grid; grid-template-columns: repeat(3, 137px); justify-content: center; padding: 54px 0 0; text-align: center; font-size: 11px; line-height: 14px; }
.trio figure { display: flex; flex-direction: column; align-items: center; gap: 17px; white-space: nowrap; }
.trio.discs { padding-top: 36px; font-family: "Liberation Sans", sans-serif; font-size: 9px; line-height: 11px; }
.trio.discs figure { gap: 23px; }
.question { position: relative; height: 156px; color: #fff; font-size: 20px; line-height: 24px; padding: 57px 0 0 49px; white-space: nowrap; }
.question p { position: relative; }

/* editor */
.editor { flex: 1; min-width: 0; margin-left: 8px; border-left: 2px solid #c8c8c8; display: grid; grid-template-columns: 32px 1fr; grid-template-rows: 33px 1fr; background: #f5f5f5; }
.corner { background: #f0f0f0; border-right: 2px solid #dcdcdc; border-bottom: 2px solid #d0d0d0; }
.hruler { background: #fdfdfd; border-bottom: 2px solid #dedede; padding: 0 243px 0 262px; }
.hspan { display: flex; height: 38px; padding: 0 8px 0 13px; background: linear-gradient(#bdbdbd, #bdbdbd) 0 100% / 2px 30px no-repeat, linear-gradient(#bdbdbd, #bdbdbd) 100% 100% / 2px 30px no-repeat; }
.hspan span { flex: 1; height: 31px; text-align: center; font-size: 18px; line-height: 20px; color: #777; background: linear-gradient(#bdbdbd, #bdbdbd) 0 100% / 2px 18px no-repeat, linear-gradient(90deg, #bdbdbd 2px, transparent 2px) 0 100% / 12.5% 8px repeat-x; }
.hspan span:last-child { border-right: 2px solid #bdbdbd; }
.vruler { background: #fdfdfd; border-right: 2px solid #dedede; padding: 135px 0 123px 8px; }
.vspan { height: 1036px; width: 30px; padding: 30px 0 27px; display: flex; flex-direction: column; background: linear-gradient(#bdbdbd, #bdbdbd) 0 0 / 30px 2px no-repeat, linear-gradient(#bdbdbd, #bdbdbd) 0 100% / 30px 2px no-repeat, linear-gradient(#bdbdbd, #bdbdbd) 14px 12px / 8px 2px no-repeat, linear-gradient(#bdbdbd, #bdbdbd) 4px 1009px / 18px 2px no-repeat, linear-gradient(#bdbdbd, #bdbdbd) 14px 1026px / 8px 2px no-repeat; }
.vspan span { flex: 1; width: 22px; display: flex; align-items: center; font-size: 18px; line-height: 20px; color: #777; background: linear-gradient(#bdbdbd, #bdbdbd) 100% 0 / 18px 2px no-repeat, linear-gradient(#bdbdbd 2px, transparent 2px) 100% 0 / 8px 12.5% repeat-y; }
.vspan em { font-style: normal; writing-mode: vertical-rl; transform: rotate(180deg); margin: 0 0 3px -7px; }
.stage { margin: 15px 0 0 16px; background: #ebebeb; padding: 42px 237px 0 247px; box-shadow: inset 0 -7px #f8f8f8, inset 0 -9px #c8c8c8; }
.copilot { display: flex; align-items: center; justify-content: center; width: 66px; height: 64px; margin-bottom: 16px; background: #fff; border: 2px solid #d4d4d4; border-radius: 14px; }
.slide { position: relative; width: 100%; height: 1035px; color: #fff; font-family: Roboto, "Liberation Sans", sans-serif; box-shadow: 0 1px 0 #fff, 0 10px 36px rgba(0, 0, 0, 0.12); }
.slide h1 { position: relative; padding: 459px 0 0 655px; font-family: "Liberation Sans", sans-serif; font-size: 63px; line-height: 76px; white-space: nowrap; }
.author { position: relative; padding: 162px 59px 0 0; text-align: right; font-size: 33px; line-height: 40px; font-weight: 500; color: #d5d9dc; }
.slide .spk { right: 35px; bottom: 45px; }

/* status bar */
.status { display: flex; align-items: center; flex: none; height: 56px; padding: 0 40px 2px 33px; border-top: 2px solid #b8b8b8; background: linear-gradient(90deg, #f5f5f5 200px, transparent 420px, transparent 2500px, #f5f5f5 2700px), linear-gradient(#ededed, #d8d8d8); box-shadow: 0 4px #0a0a0a; border-radius: 0 0 10px 10px; color: #585858; font-size: 24px; white-space: nowrap; }
.lang { margin-left: 44px; }
.a11y { display: flex; align-items: center; gap: 11px; margin-left: 45px; }
.grow { flex: 1; }
.st { display: flex; align-items: center; gap: 13px; margin-right: 38px; }
.comments { margin-right: 26px; }
.view { display: flex; align-items: center; justify-content: center; width: 62px; height: 44px; margin-right: 10px; border-radius: 4px; }
.view.on { background: #aaa; }
.zoomout { margin: 0 14px 0 8px; }
.zoomin { margin: 0 14px 0 12px; }
.zoom { appearance: none; width: 200px; height: 32px; margin: 0; background: linear-gradient(#a6a6a6, #a6a6a6) center / 100% 8px no-repeat; border-radius: 4px; }
.zoom::-webkit-slider-thumb { appearance: none; width: 32px; height: 32px; border-radius: 50%; background: #fafafa; box-shadow: 0 1px 3px #777; }
.pct { margin-left: 20px; }
.fit { margin-left: 43px; }
.desktop-edge { flex: none; height: 4px; background: linear-gradient(90deg, #0a0a0a 340px, transparent 340px, transparent 2580px, #0a0a0a 2580px), linear-gradient(#0a0a0a 2px, #77736e 2px); }
```
